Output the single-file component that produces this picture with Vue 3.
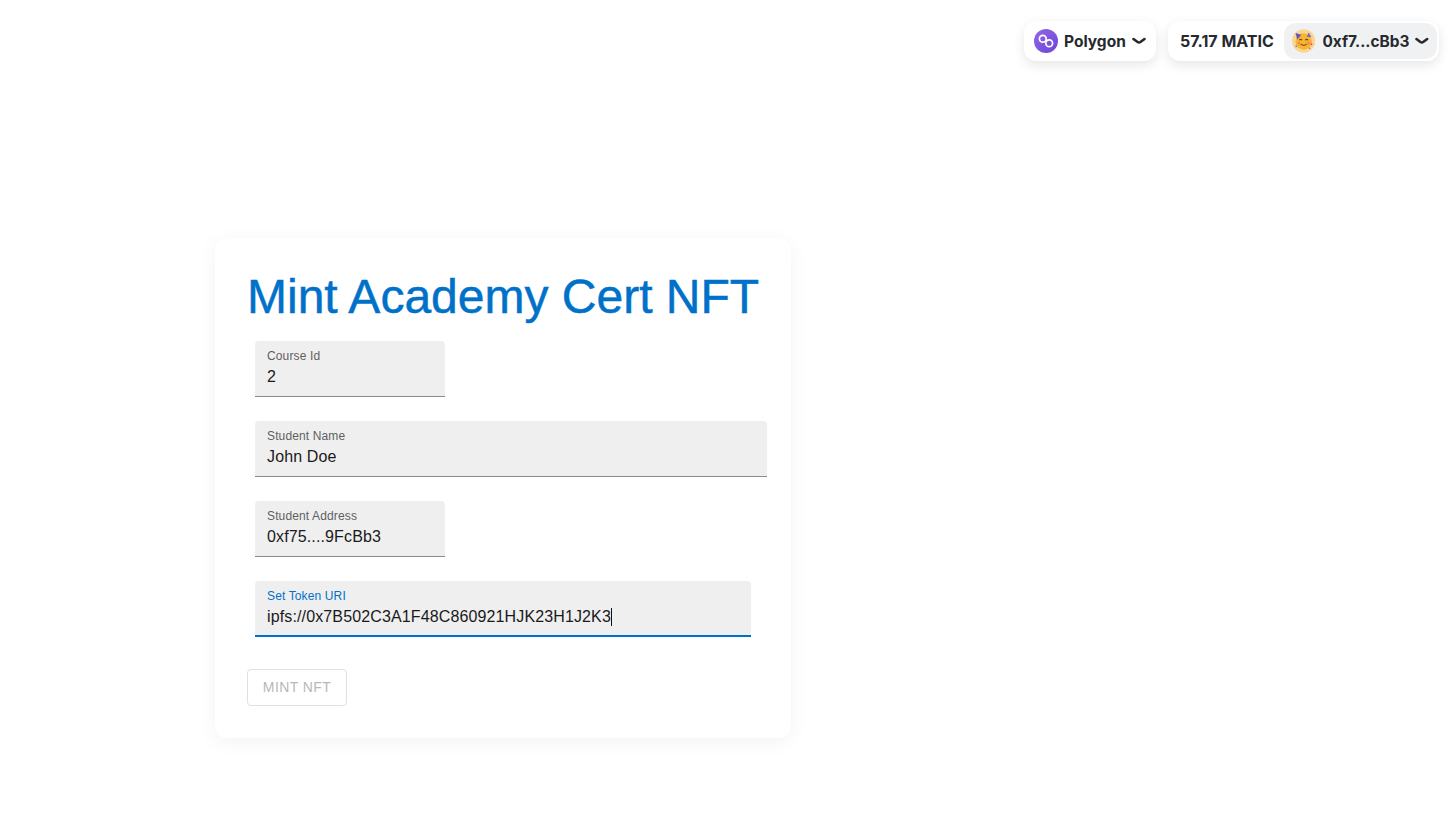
<script setup>
const fields = [
  { label: 'Course Id', value: '2', width: '190px' },
  { label: 'Student Name', value: 'John Doe', width: '512px' },
  { label: 'Student Address', value: '0xf75....9FcBb3', width: '190px' },
  { label: 'Set Token URI', value: 'ipfs://0x7B502C3A1F48C860921HJK23H1J2K3', width: '496px', focused: true }
];
</script>

<template>
  <div class="page">
    <header class="topbar">
      <button class="pill chain">
        <svg class="chain-icon" width="24" height="24" viewBox="0 0 24 24">
          <defs>
            <linearGradient id="poly" x1="0" y1="0" x2="1" y2="1">
              <stop offset="0" stop-color="#9168e8" />
              <stop offset="1" stop-color="#6d44d6" />
            </linearGradient>
          </defs>
          <circle cx="12" cy="12" r="12" fill="url(#poly)" />
          <circle cx="8.8" cy="9.8" r="3.4" fill="none" stroke="#fff" stroke-width="1.7" />
          <circle cx="15.2" cy="14.2" r="3.4" fill="none" stroke="#fff" stroke-width="1.7" />
        </svg>
        <span class="chain-name">Polygon</span>
        <svg class="chevron" width="14" height="8" viewBox="0 0 14 8">
          <path d="M1.5 2 L5.6 5 Q7 6 8.4 5 L12.5 2" fill="none" stroke="#25292e" stroke-width="2.6" stroke-linecap="round" />
        </svg>
      </button>
      <div class="pill account">
        <span class="balance">57.17 MATIC</span>
        <button class="address">
          <svg class="avatar" width="24" height="24" viewBox="0 0 24 24">
            <circle cx="12" cy="12" r="12" fill="#fcd590" />
            <circle cx="12" cy="12.5" r="8.4" fill="#f8b62f" />
            <path d="M3.6 3.8 L9.6 5.6 L5.4 10.4 Z" fill="#5f52cf" />
            <path d="M17.2 3.4 L20 8.2 L15.2 7.6 Z" fill="#7567dd" />
            <path d="M7.4 11 q1.5 -1.4 3 0 M13.6 11 q1.5 -1.4 3 0" fill="none" stroke="#75451a" stroke-width="1.1" />
            <path d="M9 15.2 q3 2.4 6 0" fill="none" stroke="#75451a" stroke-width="1.1" />
            <circle cx="7.2" cy="14.2" r="1.5" fill="#f3845a" />
            <circle cx="16.8" cy="14.2" r="1.5" fill="#f3845a" />
            <circle cx="20" cy="15.4" r="1" fill="#dd4f78" />
            <circle cx="4.4" cy="17.4" r="1" fill="#6294dd" />
            <circle cx="18" cy="19.4" r="0.8" fill="#8a63d8" />
          </svg>
          <span class="short">0xf7...cBb3</span>
          <svg class="chevron" width="14" height="8" viewBox="0 0 14 8">
            <path d="M1.5 2 L5.6 5 Q7 6 8.4 5 L12.5 2" fill="none" stroke="#25292e" stroke-width="2.6" stroke-linecap="round" />
          </svg>
        </button>
      </div>
    </header>

    <main class="card">
      <h1 class="title">Mint Academy Cert NFT</h1>
      <div class="fields">
        <div
          v-for="f in fields"
          :key="f.label"
          class="field"
          :class="{ focused: f.focused }"
          :style="{ width: f.width }"
        >
          <span class="label">{{ f.label }}</span>
          <span class="value">{{ f.value }}<i v-if="f.focused" class="caret"></i></span>
        </div>
      </div>
      <button class="mint" disabled>MINT NFT</button>
    </main>
  </div>
</template>

<style>
html, body {
  margin: 0;
  background: #fff;
}
</style>

<style scoped>
.page {
  height: 816px;
  overflow: hidden;
  font-family: "Liberation Sans", Arial, sans-serif;
}

.topbar {
  display: flex;
  justify-content: flex-end;
  gap: 12px;
  padding: 21px 13px 0 0;
}

.pill {
  display: flex;
  align-items: center;
  height: 40px;
  box-sizing: border-box;
  border: none;
  border-radius: 12px;
  background: #fff;
  box-shadow: 0 4px 12px rgba(0, 0, 0, 0.1);
  font-family: Inter, sans-serif;
  font-size: 15.5px;
  font-weight: 700;
  color: #25292e;
}

.chain {
  width: 132px;
  padding: 0 10px;
  gap: 6px;
}

.account {
  width: 271px;
  padding: 0 2px 0 12px;
}

.balance {
  width: 104px;
  font-size: 16px;
  white-space: nowrap;
}

.address {
  display: flex;
  align-items: center;
  gap: 6px;
  height: 36px;
  width: 153px;
  padding: 0 8px;
  box-sizing: border-box;
  border: none;
  border-radius: 12px;
  background: #f0f1f2;
  font: inherit;
  color: inherit;
}

.short {
  margin-left: 1px;
  font-size: 15.4px;
}

.title {
  margin: -1px 0 1px;
  font-size: 48px;
  font-weight: 400;
  line-height: 56px;
  color: #0071c9;
  white-space: nowrap;
  -webkit-text-stroke: 0.5px #0071c9;
}

.card {
  width: 576px;
  box-sizing: border-box;
  margin: 177px 0 0 215px;
  padding: 32px;
  border-radius: 12px;
  background: #fff;
  box-shadow: 0 4px 20px rgba(0, 0, 0, 0.05);
}

.fields {
  display: flex;
  flex-direction: column;
  gap: 24px;
  padding: 15px 0 32px 8px;
}

.field {
  display: flex;
  flex-direction: column;
  height: 56px;
  box-sizing: border-box;
  padding: 8px 12px 0;
  border-radius: 4px 4px 0 0;
  border-bottom: 1px solid #8a8a8a;
  background: #efefef;
}

.field.focused {
  border-bottom: 2px solid #0071c9;
}

.label {
  font-size: 12px;
  line-height: 14px;
  letter-spacing: 0.13px;
  color: #5f5f5f;
}

.focused .label {
  color: #0071c9;
}

.value {
  margin-top: 4px;
  font-size: 16px;
  line-height: 20px;
  letter-spacing: 0.13px;
  color: #1a1a1a;
  white-space: nowrap;
}

.caret {
  display: inline-block;
  width: 1px;
  height: 18px;
  vertical-align: -4px;
  background: #111;
}

.mint {
  display: block;
  width: 100px;
  height: 37px;
  box-sizing: border-box;
  padding: 0 0 2px;
  border: 1px solid #e0e0e0;
  border-radius: 4px;
  background: #fff;
  font-family: "Liberation Sans", Arial, sans-serif;
  font-size: 14px;
  letter-spacing: 0.4px;
  color: #b8b8b8;
}
</style>
